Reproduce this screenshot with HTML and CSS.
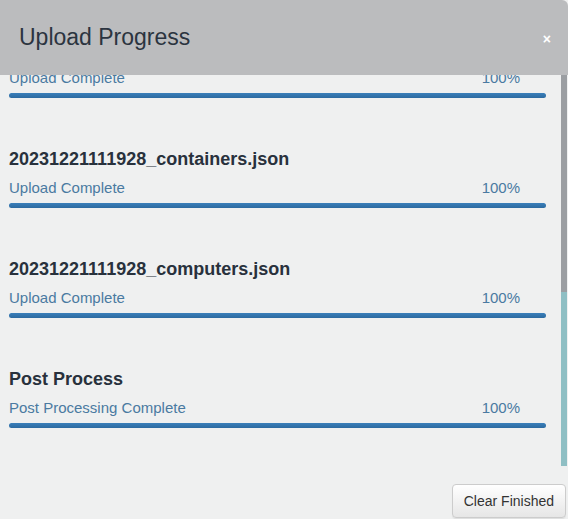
FILE: index.html
```html
<!DOCTYPE html>
<html>
<head>
<meta charset="utf-8">
<link rel="stylesheet" href="styles.css">
</head>
<body>
<div class="modal">
  <div class="modal-header">
    <h4 class="modal-title">Upload Progress</h4>
    <span class="close">×</span>
  </div>
  <div class="modal-middle">
    <div class="scroll-area">
      <div class="list">
        <div class="item">
          <div class="status-row"><span>Upload Complete</span><span>100%</span></div>
          <div class="progress"><div class="progress-bar" style="width:100%"></div></div>
        </div>
        <div class="item">
          <div class="item-title">20231221111928_containers.json</div>
          <div class="status-row"><span>Upload Complete</span><span>100%</span></div>
          <div class="progress"><div class="progress-bar" style="width:100%"></div></div>
        </div>
        <div class="item">
          <div class="item-title">20231221111928_computers.json</div>
          <div class="status-row"><span>Upload Complete</span><span>100%</span></div>
          <div class="progress"><div class="progress-bar" style="width:100%"></div></div>
        </div>
        <div class="item">
          <div class="item-title">Post Process</div>
          <div class="status-row"><span>Post Processing Complete</span><span>100%</span></div>
          <div class="progress"><div class="progress-bar" style="width:100%"></div></div>
        </div>
      </div>
    </div>
    <div class="scrollbar">
      <div class="thumb"></div>
      <div class="track"></div>
    </div>
  </div>
  <div class="modal-footer">
    <button class="btn">Clear Finished</button>
  </div>
</div>
</body>
</html>
```

FILE: styles.css
```css
html, body {
  margin: 0;
  padding: 0;
  height: 100%;
  overflow: hidden;
}
body {
  background: #eff0f0;
  font-family: "Liberation Sans", Arial, sans-serif;
}
.modal {
  display: flex;
  flex-direction: column;
  width: 568px;
  height: 519px;
}
.modal-header {
  height: 75px;
  flex: none;
  background: #bbbcbe;
  border-top-right-radius: 6px;
  display: flex;
  align-items: center;
  justify-content: space-between;
  padding: 0 17px 1px 19px;
  box-sizing: border-box;
}
.modal-title {
  margin: 0;
  font-size: 23px;
  font-weight: normal;
  line-height: 26px;
  color: #2b3440;
}
.close {
  color: #ffffff;
  font-size: 14px;
  font-weight: bold;
  line-height: 14px;
  margin-top: 3px;
}
.modal-middle {
  height: 391px;
  flex: none;
  display: flex;
}
.scroll-area {
  flex: 1;
  overflow: hidden;
  padding-left: 9px;
  padding-right: 15px;
}
.list {
  margin-top: -7px;
}
.item {
  padding-bottom: 51px;
}
.item-title {
  font-size: 18px;
  font-weight: bold;
  line-height: 20px;
  color: #28313c;
  margin-bottom: 9px;
}
.status-row {
  display: flex;
  justify-content: space-between;
  font-size: 15px;
  line-height: 20px;
  color: #4a7aa1;
  padding-right: 26px;
  margin-bottom: 5px;
}
.progress {
  height: 5px;
  border-radius: 3px;
  background: #e5e5e5;
  overflow: hidden;
}
.progress-bar {
  height: 100%;
  background: linear-gradient(to bottom, #3a7fba 0, #2c6aa0 100%);
}
.scrollbar {
  width: 6px;
  margin-right: 1px;
  display: flex;
  flex-direction: column;
}
.thumb {
  height: 217px;
  background: #9b9ea2;
}
.track {
  flex: 1;
  background: #8fbfc4;
}
.modal-footer {
  flex: 1;
  display: flex;
  justify-content: flex-end;
  align-items: flex-start;
  padding: 18px 2px 0 0;
}
.btn {
  font-family: "Liberation Sans", Arial, sans-serif;
  font-size: 14px;
  line-height: 20px;
  color: #333333;
  padding: 6px 11px;
  border: 1px solid #cccccc;
  border-radius: 4px;
  background: linear-gradient(to bottom, #ffffff 0, #e6e6e6 100%);
  box-shadow: inset 0 1px 0 rgba(255,255,255,.15), 0 1px 1px rgba(0,0,0,.075);
}
```
